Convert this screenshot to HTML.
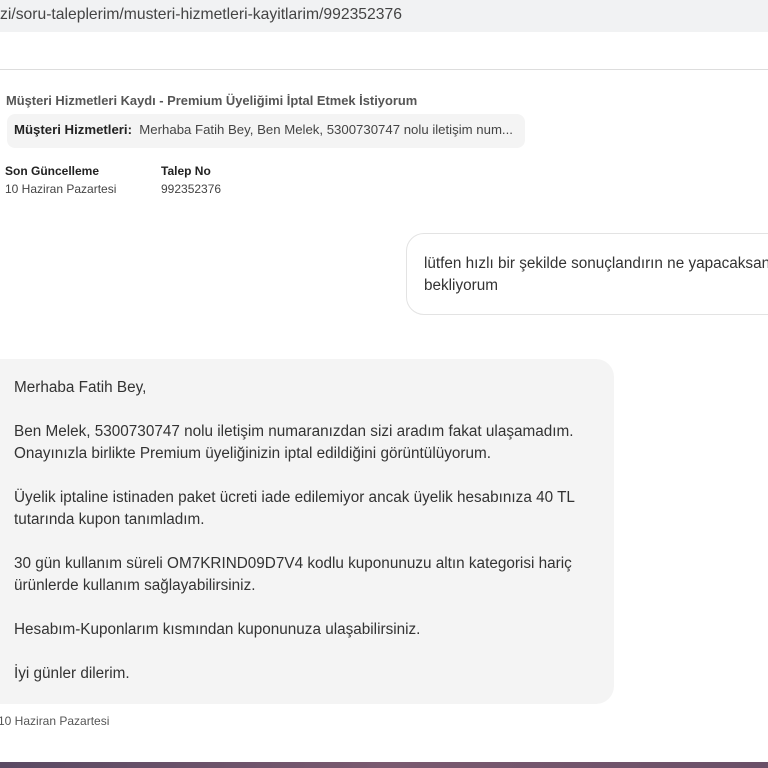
<!DOCTYPE html>
<html><head><meta charset="utf-8"><style>
*{margin:0;padding:0;box-sizing:border-box}
body{width:768px;height:768px;overflow:hidden;background:#fff;font-family:"Liberation Sans",Arial,sans-serif;position:relative;color:#333}
.addr{position:absolute;left:0;top:0;width:768px;height:32px;background:#f1f2f3;font-size:15.7px;color:#444;padding:6px 0 0 0}
.sep{position:absolute;left:0;top:69px;width:768px;height:1px;background:#ddd}
.t{position:absolute;white-space:nowrap}
.pill{position:absolute;left:7px;top:114px;width:518px;height:34px;background:#f4f4f4;border-radius:8px}
.me{position:absolute;left:406px;top:233px;width:400px;height:82px;border:1px solid #e3e3e3;border-radius:18px;background:#fff}
.bub{position:absolute;left:-20px;top:359px;width:634px;height:345px;background:#f4f4f4;border-radius:18px}
.msg{font-size:15.3px;color:#333;line-height:22px}
.task{position:absolute;left:0;top:762px;width:768px;height:6px;background:linear-gradient(90deg,#5a4a63,#7a5a70,#6a5068)}
</style></head><body>
<div class="addr">zi/soru-taleplerim/musteri-hizmetleri-kayitlarim/992352376</div>
<div class="sep"></div>
<div class="t" style="left:6px;top:93px;font-size:12.9px;font-weight:bold;color:#555">Müşteri Hizmetleri Kaydı - Premium Üyeliğimi İptal Etmek İstiyorum</div>
<div class="pill"></div>
<div class="t" style="left:14px;top:122px;font-size:13.2px;color:#444"><b style="color:#222">Müşteri Hizmetleri:</b>&nbsp; Merhaba Fatih Bey, Ben Melek, 5300730747 nolu iletişim num...</div>
<div class="t" style="left:5px;top:164px;font-size:12px;font-weight:bold;color:#222">Son Güncelleme</div>
<div class="t" style="left:5px;top:182px;font-size:12px;color:#444">10 Haziran Pazartesi</div>
<div class="t" style="left:161px;top:164px;font-size:12px;font-weight:bold;color:#222">Talep No</div>
<div class="t" style="left:161px;top:182px;font-size:12px;color:#444">992352376</div>
<div class="me"></div>
<div class="t msg" style="left:424px;top:253px">lütfen hızlı bir şekilde sonuçlandırın ne yapacaksanız<br>bekliyorum</div>
<div class="bub"></div>
<div class="t msg" style="left:14px;top:377px">Merhaba Fatih Bey,<br><br>Ben Melek, 5300730747 nolu iletişim numaranızdan sizi aradım fakat ulaşamadım.<br>Onayınızla birlikte Premium üyeliğinizin iptal edildiğini görüntülüyorum.<br><br>Üyelik iptaline istinaden paket ücreti iade edilemiyor ancak üyelik hesabınıza 40 TL<br>tutarında kupon tanımladım.<br><br>30 gün kullanım süreli OM7KRIND09D7V4 kodlu kuponunuzu altın kategorisi hariç<br>ürünlerde kullanım sağlayabilirsiniz.<br><br>Hesabım-Kuponlarım kısmından kuponunuza ulaşabilirsiniz.<br><br>İyi günler dilerim.</div>
<div class="t" style="left:-2px;top:714px;font-size:12px;color:#555">10 Haziran Pazartesi</div>
<div class="task"></div>
</body></html>
